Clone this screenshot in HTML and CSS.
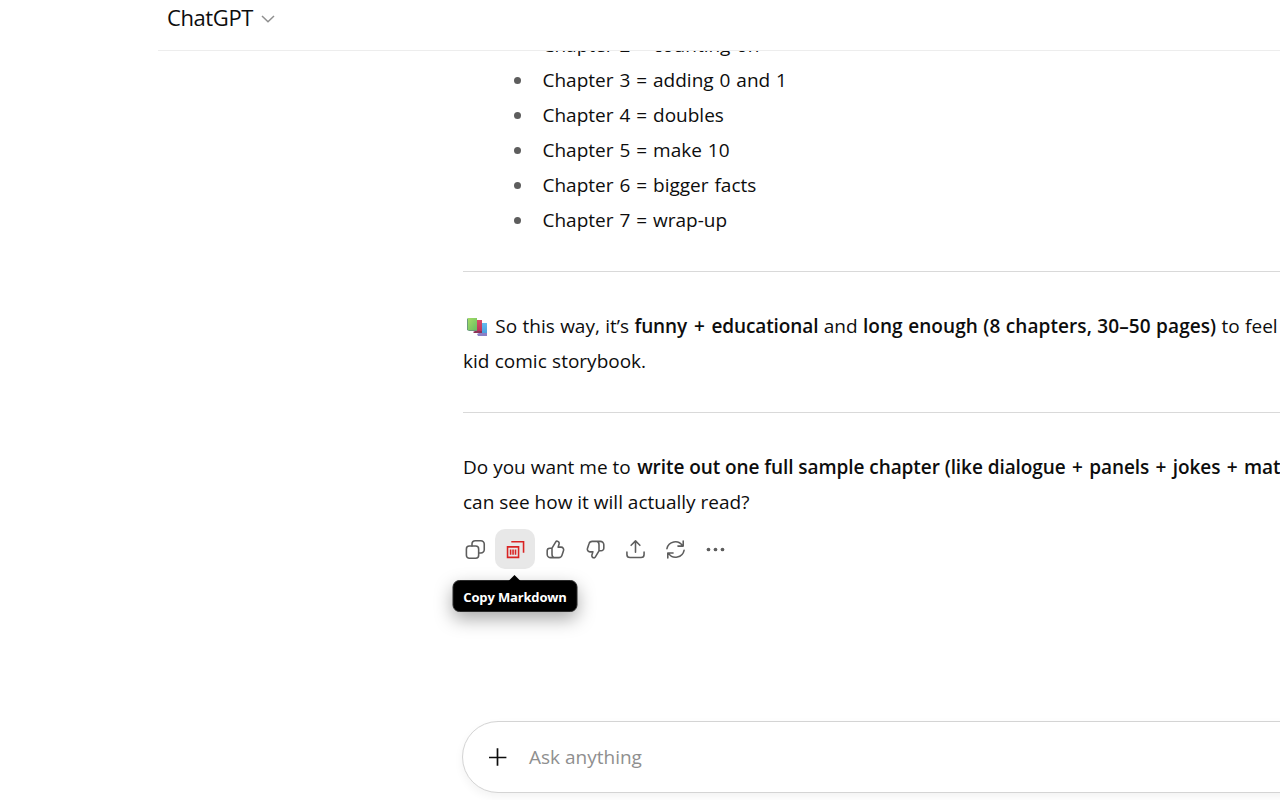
FILE: index.html
```html
<!DOCTYPE html>
<html lang="en">
<head>
  <meta charset="UTF-8">
  <meta name="viewport" content="width=device-width, initial-scale=1.0">
  <title>ChatGPT</title>
  <link rel="stylesheet" href="styles.css">
</head>
<body>
  <header class="topbar">
    <span class="model">ChatGPT</span>
    <svg class="chevron" width="14" height="8" viewBox="0 0 14 8"><path d="M1 1l6 5.8L13 1"/></svg>
  </header>

  <main class="thread">
    <ul class="chapters">
      <li>Chapter 2 = counting on</li>
      <li>Chapter 3 = adding 0 and 1</li>
      <li>Chapter 4 = doubles</li>
      <li>Chapter 5 = make 10</li>
      <li>Chapter 6 = bigger facts</li>
      <li>Chapter 7 = wrap-up</li>
    </ul>
    <hr>
    <p class="summary">
      <svg class="books" width="22" height="20" viewBox="0 0 22 20">
        <defs>
          <linearGradient id="green" x2="1" y2="1"><stop stop-color="#a5dc66"/><stop offset="1" stop-color="#68bd62"/></linearGradient>
          <linearGradient id="red" x2="0" y2="1"><stop stop-color="#d94b68"/><stop offset="1" stop-color="#b8325a"/></linearGradient>
          <linearGradient id="blue" x2="0" y2="1"><stop stop-color="#62bdf0"/><stop offset="1" stop-color="#4a9bdc"/></linearGradient>
        </defs>
        <path d="M13 6h8v11h-8z" fill="url(#blue)"/>
        <path d="M11 17l2-1h8v3h-9z" fill="#8a7fc6"/>
        <path d="M9 3h7v12H9z" fill="url(#red)"/>
        <path d="M7 15l2-1h7v2H8z" fill="#8b3157"/>
        <path d="M2 1h9v12H2z" fill="url(#green)"/>
        <path d="M1 2l1-1v12h9v1H3l-2-1z" fill="#6b9c7c"/>
      </svg>
      So this way, it’s <strong>funny <span class="op">+</span> educational</strong> and <strong class="length">long enough (8 chapters, 30–50 pages)</strong> to feel<br>
      kid comic storybook.
    </p>
    <hr>
    <p>
      Do you want me to <strong class="offer">write out one full sample chapter (like dialogue <span class="op">+</span> panels <span class="op">+</span> jokes <span class="op">+</span> math)</strong><br>
      can see how it will actually read?
    </p>

    <div class="actions">
      <button aria-label="Copy">
        <svg viewBox="0 0 24 24"><rect x="1.6" y="8" width="14" height="14" rx="3.4"/><path d="M8 8V5.8A3.8 3.8 0 0 1 11.8 2h6.4A3.8 3.8 0 0 1 22 5.8v6.4a3.8 3.8 0 0 1-3.8 3.8h-2.4"/></svg>
      </button>
      <button class="markdown" aria-label="Copy Markdown">
        <svg viewBox="0 0 24 24"><path d="M2.9 9h12.6v12H2.9zM6.4 12v6M9.2 12v6M12 12v6M7.2 3.2h14v12.4"/></svg>
        <span class="tooltip">Copy Markdown</span>
      </button>
      <button aria-label="Good response">
        <svg viewBox="0 0 24 24"><path d="M8 10.5L12.3 3.3c.4-.7 1.1-1 1.9-.8 1.5.4 2.3 1.8 1.9 3.2L15 9.3h3.4c2 0 3.4 1.9 2.8 3.8l-1.7 5.3a4 4 0 0 1-3.8 2.9H6.5a4 4 0 0 1-4-4v-3.8a3 3 0 0 1 3-3H8zM8 10.5v7c0 2 .8 3.3 2.5 3.8"/></svg>
      </button>
      <button aria-label="Bad response">
        <svg viewBox="0 0 24 24"><path d="M16 13.5l-4.3 7.2c-.4.7-1.1 1-1.9.8-1.5-.4-2.3-1.8-1.9-3.2L9 14.7H5.6c-2 0-3.4-1.9-2.8-3.8l1.7-5.3a4 4 0 0 1 3.8-2.9h9.2a4 4 0 0 1 4 4v3.8a3 3 0 0 1-3 3H16zM16 13.5v-7c0-2-.8-3.3-2.5-3.8"/></svg>
      </button>
      <button aria-label="Share">
        <svg viewBox="0 0 24 24"><path d="M12 15V2.4M7 7.2l5-5 5 5M2.2 15v2.7a3.5 3.5 0 0 0 3.5 3.5h12.6a3.5 3.5 0 0 0 3.5-3.5V15"/></svg>
      </button>
      <button aria-label="Try again">
        <svg viewBox="0 0 24 24"><path d="M2.2 11A9.8 9.8 0 0 1 20 7.6M20.8 2.2v5.9h-6M21.8 13A9.8 9.8 0 0 1 4 16.4M3.2 21.8v-5.9h6"/></svg>
      </button>
      <button class="more" aria-label="More actions">
        <svg viewBox="0 0 24 24"><circle cx="4" cy="12" r="2.1"/><circle cx="12" cy="12" r="2.1"/><circle cx="20" cy="12" r="2.1"/></svg>
      </button>
    </div>
  </main>

  <footer class="composer">
    <svg class="plus" width="18" height="18" viewBox="0 0 18 18"><path d="M8.5 .3v17.4M0 9.5h17.4"/></svg>
    <span>Ask anything</span>
  </footer>
</body>
</html>
```

FILE: styles.css
```css
* {
  box-sizing: border-box;
}
body {
  margin: 0;
  height: 800px;
  overflow: hidden;
  display: flex;
  flex-direction: column;
  background: #fff;
  color: #0d0d0d;
  font-family: "Segoe UI", "Open Sans", "Noto Sans", sans-serif;
  font-size: 19px;
  line-height: 35px;
}
.topbar {
  flex: none;
  height: 51px;
  margin-left: 158px;
  padding-left: 9px;
  border-bottom: 1px solid #ededed;
  display: flex;
  align-items: flex-start;
  gap: 8px;
}
.model {
  font-size: 22px;
  letter-spacing: -0.4px;
}
.chevron {
  margin-top: 15px;
  fill: none;
  stroke: #8f8f8f;
  stroke-width: 1.5;
}
.thread {
  flex: none;
  height: 671px;
  margin-left: 403px;
  padding-left: 60px;
  overflow: hidden;
  white-space: nowrap;
}
.chapters {
  list-style: none;
  margin: -23px 0 33px;
  padding: 0;
  word-spacing: 1px;
}
.chapters li {
  display: flex;
  align-items: center;
  padding-left: 51px;
}
.chapters li::before {
  content: "";
  width: 7px;
  height: 7px;
  margin-right: 21.5px;
  border-radius: 50%;
  background: #5d5d5d;
}
hr {
  height: 1px;
  margin: 0;
  border: 0;
  background: #d9d9d9;
}
p {
  margin: 37px 0 33px;
}
.summary {
  word-spacing: 0.4px;
}
strong {
  font-weight: 600;
  letter-spacing: -0.1px;
}
.length {
  letter-spacing: 0.08px;
}
.offer {
  margin-left: 1.5px;
  letter-spacing: -0.07px;
}
.op {
  margin: 0 1.5px;
}
.books {
  margin: 0 2px 0 3px;
  vertical-align: -4px;
}
.actions {
  display: flex;
  margin: -24px 0 0 -8px;
}
.actions button {
  position: relative;
  display: flex;
  align-items: center;
  justify-content: center;
  width: 40px;
  height: 40px;
  padding: 0;
  border: 0;
  border-radius: 10px;
  background: none;
}
.actions svg {
  width: 21px;
  height: 21px;
  fill: none;
  stroke: #5d5d5d;
  stroke-width: 1.8;
  stroke-linecap: round;
  stroke-linejoin: round;
}
.actions .markdown {
  background: #e8e8e8;
}
.markdown svg {
  stroke: #d92323;
  stroke-linecap: butt;
  stroke-linejoin: miter;
}
.actions .more svg {
  fill: #5d5d5d;
  stroke: none;
}
.tooltip {
  position: absolute;
  top: 51px;
  left: 50%;
  width: 125px;
  height: 32px;
  transform: translateX(-50%);
  border: 1px solid #2b2b2b;
  border-radius: 7px;
  background: #000;
  color: #fff;
  font: 700 13px/32px "Segoe UI", "Open Sans", sans-serif;
  letter-spacing: -0.15px;
  box-shadow: 0 7px 18px rgba(0, 0, 0, 0.34);
}
.tooltip::before {
  content: "";
  position: absolute;
  top: -6px;
  left: 55px;
  border: 6px solid transparent;
  border-top: 0;
  border-bottom-color: #000;
}
.composer {
  flex: none;
  height: 72px;
  margin: -1px -60px 0 462px;
  padding-left: 26px;
  border: 1px solid #d4d4d4;
  border-radius: 36px;
  background: #fff;
  box-shadow: 0 4px 10px rgba(0, 0, 0, 0.05);
  display: flex;
  align-items: center;
  gap: 22px;
  color: #8f8f8f;
}
.plus {
  stroke: #0d0d0d;
  stroke-width: 1.7;
}
```
